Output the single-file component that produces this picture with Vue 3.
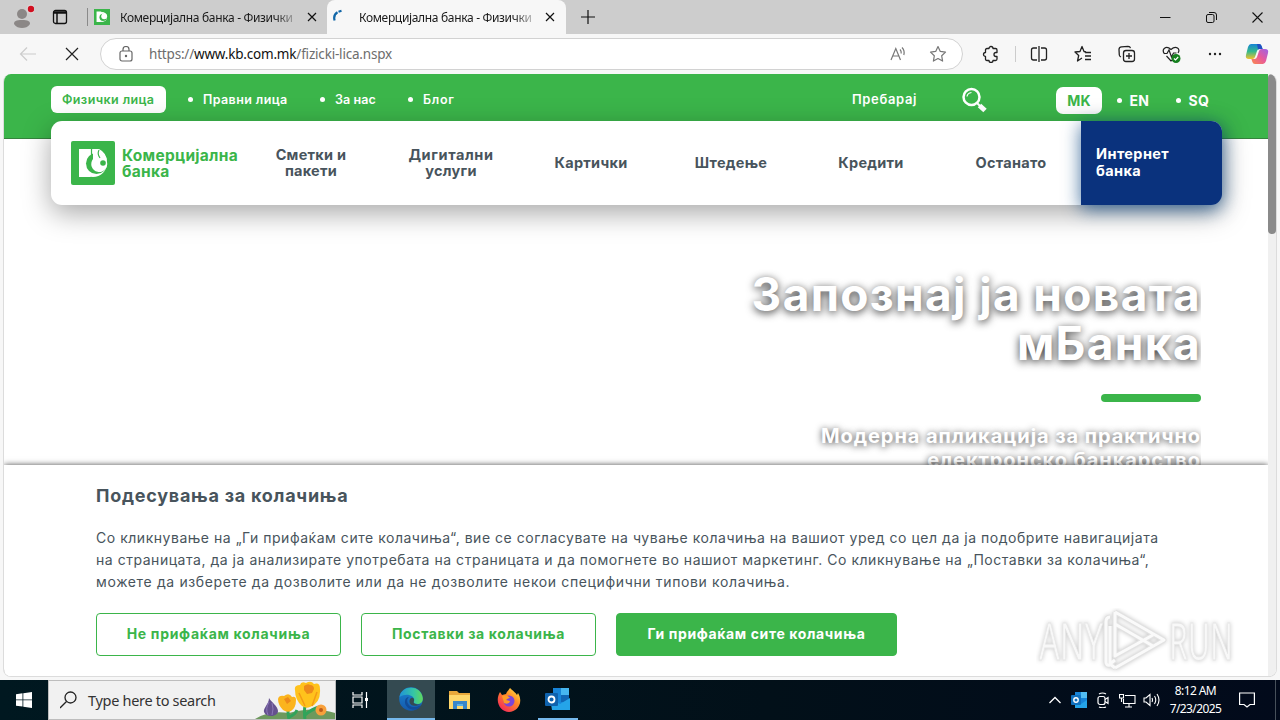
<template>
  <div class="screen">
    <div class="tabs">
      <div class="profile">
        <svg width="24" height="26" viewBox="0 0 24 26">
          <circle cx="12" cy="10" r="5" fill="#8b8786" />
          <path d="M4 20c0-3 2-4 8-4s8 1 8 4c-2 3-5 4-8 4s-6-1-8-4z" fill="#8b8786" />
          <circle cx="21" cy="5" r="4.5" fill="#dcd4d4" />
          <circle cx="21" cy="5" r="3.2" fill="#d10f20" />
        </svg>
      </div>
      <svg class="workspaces" width="16" height="16" viewBox="0 0 16 16" fill="none" stroke="#111" stroke-width="1.3">
        <rect x="1.500" y="1.500" width="13" height="13" rx="2" />
        <path d="M1.500 3.500h13" stroke-width="2.500" />
        <path d="M5 4v10" stroke-width="1.500" />
      </svg>
      <div class="tab first">
        <svg class="favicon" width="16" height="16" viewBox="0 0 44 44">
          <rect width="44" height="44" fill="#3bb54a" />
          <path d="M7 7h13v8q-6 4-6 10 0 7 6 11H7z" fill="#fff" />
          <circle cx="22" cy="22" r="14" fill="#fff" />
          <circle cx="25" cy="23" r="10" fill="#3bb54a" />
          <circle cx="28" cy="20" r="8" fill="#fff" />
        </svg>
        <span class="tab-title">Комерцијална банка - Физички</span>
        <svg class="x" width="10" height="10" viewBox="0 0 10 10"><path d="M1 1l8 8M9 1l-8 8" stroke="#111" stroke-width="1.2" /></svg>
      </div>
      <div class="tab active">
        <svg class="favicon" width="16" height="16" viewBox="0 0 16 16" fill="none" stroke="#1267a8" stroke-width="2.200">
          <path d="M2.600 11.500Q1 6 5.500 3.300M6.500 2.700L9.500 1.800" />
        </svg>
        <span class="tab-title">Комерцијална банка - Физички</span>
        <svg class="x" width="10" height="10" viewBox="0 0 10 10"><path d="M1 1l8 8M9 1l-8 8" stroke="#111" stroke-width="1.2" /></svg>
      </div>
      <svg class="plus" width="14" height="14" viewBox="0 0 14 14"><path d="M7 0v14M0 7h14" stroke="#111" stroke-width="1.2" /></svg>
      <div class="window-buttons">
        <svg width="11" height="11" viewBox="0 0 11 11"><path d="M0 5.500h10.500" stroke="#111" /></svg>
        <svg width="11" height="11" viewBox="0 0 11 11" fill="none" stroke="#111">
          <rect x="0.500" y="2.500" width="7.500" height="8" rx="1.500" />
          <path d="M3 .5h5q2.500 0 2.500 2.500v5" />
        </svg>
        <svg width="11" height="11" viewBox="0 0 11 11"><path d="M.5.5l10 10M10.500.5l-10 10" stroke="#111" stroke-width="1.100" /></svg>
      </div>
    </div>

    <div class="toolbar">
      <svg class="back" width="18" height="16" viewBox="0 0 18 16" fill="none" stroke="#ccc" stroke-width="1.200"><path d="M17 8H2M8 1.500L1.500 8 8 14.500" /></svg>
      <svg class="stop" width="14" height="14" viewBox="0 0 14 14"><path d="M1 1l12 12M13 1L1 13" stroke="#222" stroke-width="1.200" /></svg>
      <div class="address">
        <svg width="14" height="16" viewBox="0 0 14 16" fill="none" stroke="#666" stroke-width="1.200">
          <rect x="1" y="5" width="12" height="10" rx="2" />
          <path d="M4 5V3.500a3 3 0 0 1 6 0V5" />
          <circle cx="7" cy="10" r=".6" fill="#555" />
        </svg>
        <span class="url">https://<b>www.kb.com.mk</b>/fizicki-lica.nspx</span>
        <svg class="read" width="17" height="16" viewBox="0 0 17 16" fill="none" stroke="#777" stroke-width="1.200">
          <path d="M1 14L5.800 2.500 10.500 14M2.700 10h6.200M10 3.500q1.500 1.500 1.200 4M12 1.500q3 3 1.800 7.500" />
        </svg>
        <svg width="18" height="18" viewBox="0 0 18 18" fill="none" stroke="#777" stroke-width="1.200" stroke-linejoin="round"><path d="M9 1.500l2.300 4.900 5.200.7-3.800 3.700.9 5.300L9 13.500l-4.600 2.600.9-5.300L1.500 7.100l5.200-.7z" /></svg>
      </div>
      <div class="tools">
        <svg width="18" height="18" viewBox="0 0 18 18" fill="none" stroke="#222" stroke-width="1.300" stroke-linejoin="round">
          <path d="M5 3.500h2a2 2 0 0 1 4 0h2.500q1.500 0 1.500 1.500v2.500h-1a2 2 0 0 0 0 4h1V14q0 1.500-1.500 1.500H11a2 2 0 0 1-4 0H5Q3.500 15.500 3.500 14v-2.500a2 2 0 0 1 0-4V5Q3.500 3.500 5 3.500z" />
        </svg>
        <i class="divider"></i>
        <svg width="18" height="18" viewBox="0 0 18 18" fill="none" stroke="#222" stroke-width="1.300">
          <path d="M7 3H3.500Q1.500 3 1.500 5v8q0 2 2 2H7M11 3h3.500q2 0 2 2v8q0 2-2 2H11M9 1v16" />
        </svg>
        <svg width="18" height="18" viewBox="0 0 18 18" fill="none" stroke="#222" stroke-width="1.300" stroke-linejoin="round">
          <path d="M12 7L10 6.500 8 1.500 6 6.500l-5 .5 3.700 3.500-1.200 5.500 4.500-3M11 7.500h6M11 11h6M11 14.500h6" />
        </svg>
        <svg width="18" height="18" viewBox="0 0 18 18" fill="none" stroke="#222" stroke-width="1.300">
          <rect x="5.500" y="5.500" width="11" height="11" rx="2.500" />
          <path d="M3 12Q1.500 11.500 1.300 10L1 4.500Q1 2 3.500 1.800L10 1.300q2 0 2.500 1.800M11 8v6M8 11h6" />
        </svg>
        <svg width="20" height="18" viewBox="0 0 20 18" fill="none" stroke="#222" stroke-width="1.200">
          <path d="M2.500 9C-1 4 4 0 9 4.500 14 0 19 4 16 8M4.500 11l4.500 5 2-1.500M2 8.500h3l2-3.500 2.500 7 2-4h3" />
          <circle cx="14" cy="13.500" r="4.500" fill="#16801f" stroke="none" />
          <path d="M12 13.500l1.500 1.500 2.700-3" stroke="#fff" />
        </svg>
        <svg width="14" height="4" viewBox="0 0 14 4" fill="#222"><circle cx="2" cy="2" r="1.200" /><circle cx="7" cy="2" r="1.200" /><circle cx="12" cy="2" r="1.200" /></svg>
        <svg class="copilot" width="24" height="22" viewBox="0 0 24 22">
          <defs>
            <linearGradient id="cpA" x1="0" y1="0" x2="0" y2="1"><stop offset="0" stop-color="#1685d5" /><stop offset=".5" stop-color="#35b98b" /><stop offset="1" stop-color="#f2c12d" /></linearGradient>
            <linearGradient id="cpB" x1="1" y1="0" x2="0" y2="1"><stop offset="0" stop-color="#9b63e8" /><stop offset=".5" stop-color="#e85a9a" /><stop offset="1" stop-color="#fb8b4b" /></linearGradient>
          </defs>
          <path d="M6 1h8q2 0 2.600 2l1 3h-3q-2 0-2.600 2l-2 6q-.7 2-2.700 2H4q-4 0-3-4l2-8q1-3 3-3z" fill="url(#cpA)" />
          <path d="M18 21h-8q-2 0-2.600-2l-1-3h3q2 0 2.600-2l2-6q.7-2 2.700-2H20q4 0 3 4l-2 8q-1 3-3 3z" fill="url(#cpB)" />
          <path d="M12 1h2q2 0 2.600 2l1 3h-3q-1 0-1.600.6z" fill="#214fc4" />
        </svg>
      </div>
    </div>

    <div class="viewport">
      <div class="page">
        <header class="topbar">
          <span class="segment chosen">Физички лица</span>
          <span class="segment s-prav">Правни лица</span>
          <span class="segment s-nas">За нас</span>
          <span class="segment s-blog">Блог</span>
          <span class="search-label">Пребарај</span>
          <svg class="magnifier" width="26" height="26" viewBox="0 0 26 26" fill="none" stroke="#fff">
            <circle cx="10.500" cy="10" r="8" stroke-width="2.500" />
            <path d="M6 9.500q.5-3.500 4.500-4" stroke-width="1.200" />
            <path d="M16 16l3 3" stroke-width="2" />
            <path d="M18.500 18.500l5.500 5" stroke-width="5" />
          </svg>
          <span class="lang chosen">MK</span>
          <span class="lang l-en">EN</span>
          <span class="lang l-sq">SQ</span>
        </header>

        <nav class="menu">
          <div class="brand">
            <svg width="44" height="44" viewBox="0 0 44 44">
              <rect width="44" height="44" rx="2" fill="#3bb54a" />
              <path d="M8 8h11v10l-4 8q1 6 5 10H8z" fill="#fff" />
              <circle cx="22" cy="22" r="14" fill="#fff" />
              <path d="M8 8h12v4H8z" fill="#fff" />
              <path d="M20.500 7v7" stroke="#3bb54a" stroke-width="1.200" />
              <circle cx="25.500" cy="22.500" r="10.500" fill="#3bb54a" />
              <path d="M22 8h6q8 4 8 13a8 8 0 1 1-14-3z" fill="#fff" />
              <path d="M28 9q-2 4 1 8" fill="none" stroke="#3bb54a" stroke-width="1.200" />
              <circle cx="32" cy="22" r="2.800" fill="#3bb54a" />
            </svg>
            <div class="brand-name"><span>Комерцијална</span><span>банка</span></div>
          </div>
          <div v-for="item in menu" :key="item.id" class="menu-item" :class="item.id">
            <span v-for="line in item.lines" :key="line">{{ line }}</span>
          </div>
          <div class="ebank"><span>Интернет</span><span>банка</span></div>
        </nav>

        <section class="hero">
          <h1><span>Запознај ја новата</span><span>мБанка</span></h1>
          <div class="bar"></div>
          <p><span>Модерна апликација за практично</span><span>електронско банкарство</span></p>
        </section>

        <section class="cookies">
          <h2>Подесувања за колачиња</h2>
          <p>
            <span>Со кликнување на „Ги прифаќам сите колачиња“, вие се согласувате на чување колачиња на вашиот уред со цел да ја подобрите навигацијата</span>
            <span>на страницата, да ја анализирате употребата на страницата и да помогнете во нашиот маркетинг. Со кликнување на „Поставки за колачиња“,</span>
            <span class="last">можете да изберете да дозволите или да не дозволите некои специфични типови колачиња.</span>
          </p>
          <div class="buttons">
            <button class="deny">Не прифаќам колачиња</button>
            <button class="settings">Поставки за колачиња</button>
            <button class="accept">Ги прифаќам сите колачиња</button>
          </div>
        </section>
      </div>
      <div class="scrollbar"><div class="thumb"></div></div>

      <svg class="watermark" width="200" height="66" viewBox="0 0 200 66">
        <g class="mark halo">
          <path d="M79 4l49 28-49 28M79 4v44l38-21M79 16l38 22M74 9q-4 0-4 5v40q0 4 4 3V18M79 60l-5-4 5-4" />
          <text x="3" y="52" textLength="64" lengthAdjust="spacingAndGlyphs">ANY</text>
          <text x="133" y="52" textLength="64" lengthAdjust="spacingAndGlyphs">RUN</text>
        </g>
        <path class="inner" d="M79 4l49 28-49 28M79 4v44l38-21M79 16l38 22M74 9q-4 0-4 5v40q0 4 4 3V18M79 60l-5-4 5-4" />
      </svg>
    </div>

    <footer class="taskbar">
      <div class="start">
        <svg width="16" height="16" viewBox="0 0 16 16" fill="#fff"><path d="M0 2.200l6.500-.9v6.200H0zM7.300 1.200L16 0v7.500H7.300zM0 8.300h6.500v6.200L0 13.700zM7.300 8.300H16V16l-8.700-1.200z" /></svg>
      </div>
      <div class="searchbox">
        <svg width="18" height="18" viewBox="0 0 18 18" fill="none" stroke="#222" stroke-width="1.300"><circle cx="10.500" cy="6.500" r="5.500" /><path d="M6.500 10.500L0 17" /></svg>
        <span>Type here to search</span>
        <svg class="flowers" width="80" height="38" viewBox="0 0 80 38">
          <path d="M0 38q14-9 34-6 24-7 46 0v6z" fill="#6d995d" />
          <path d="M50 38q-2-12 3-22M50 34q7-6 14-8M34 38q-2-8 0-14M34 36q6-2 8-7" stroke="#31a45a" stroke-width="3" fill="none" />
          <path d="M14 17c2 4 9 8 9 13 0 6-12 7-14 1-1-4 5-8 5-14z" fill="#65518f" />
          <path d="M14 21q-4 7-1 13M17 22q2 6 0 12" stroke="#8c78b8" fill="none" />
          <path d="M40 9q-1-5 5-5 1-4 6-2 5-3 8 1 6-2 6 5 1 14-10 18-4 2-8-1-7-6-7-16z" fill="#ffc21c" />
          <path d="M23 18q1-4 6-3 5-4 8 1 4-1 4 3 0 8-5 11-4 2-8-1-5-5-5-11z" fill="#fbb41d" />
          <path d="M49 5q4-3 6-1 4 0 4 4l-2 4-5 1-3-4zM29 18l4-2 3 4-4 3z" fill="#ed8a1a" />
          <path d="M44 12l6 13M62 11l-5 14" stroke="#f39b15" stroke-width="1.500" />
          <circle cx="66" cy="29" r="5.500" fill="#f8a13c" /><circle cx="66" cy="29" r="2" fill="#bd5b18" />
        </svg>
      </div>
      <div class="app taskview">
        <svg width="18" height="18" viewBox="0 0 18 18" fill="none" stroke="#fff" stroke-width="1.200"><path d="M2 1v3h9V1M2 17v-3h9v3M2 6h9v6H2zM15.500 1v16" /><path d="M14 7h3v3h-3z" fill="#fff" stroke="none" /></svg>
      </div>
      <div class="app current">
        <svg width="24" height="24" viewBox="0 0 24 24">
          <defs>
            <linearGradient id="edA" x1="0" x2="1"><stop offset="0" stop-color="#2093d8" /><stop offset=".6" stop-color="#35c5a5" /><stop offset="1" stop-color="#61d85c" /></linearGradient>
            <linearGradient id="edB" x1="0" x2="0" y1="0" y2="1"><stop offset="0" stop-color="#1a85d2" /><stop offset="1" stop-color="#1559ac" /></linearGradient>
          </defs>
          <circle cx="12" cy="12" r="11.800" fill="url(#edB)" />
          <path d="M.5 10C2-2 22-3 23.800 11c.5 5-4 7-8 5.500-2-.8-1-2-.7-3C16 9 8 5 .5 10z" fill="url(#edA)" />
          <path d="M10 10c-4 3-1 11 6 10 3-.3 5-1.500 6-2-1 1.500-1.500 2.500-3 3.700C13 25 5 20 6 14c.5-3 2-4 4-4z" fill="#124c98" />
          <path d="M15 12c-2-3-5 0-4.500 3 .5 4 6 5 12 2-3 1-6 .5-7.500-1-1-1 .5-2 0-4z" fill="#344a51" />
        </svg>
      </div>
      <div class="app">
        <svg width="22" height="20" viewBox="0 0 22 20"><path d="M0 1h8l2 2h11v4H0z" fill="#e9a83b" /><path d="M0 5h21v14H0z" fill="#ffd76b" /><path d="M4 11h14v8h-4v-4H8v4H4z" fill="#3986c9" /><path d="M8 14h6v2H8z" fill="#5ab0e7" /></svg>
      </div>
      <div class="app">
        <svg width="24" height="24" viewBox="0 0 24 24">
          <defs><linearGradient id="ff" x1="1" y1="0" x2=".2" y2="1"><stop offset="0" stop-color="#fff04a" /><stop offset=".45" stop-color="#ff8a25" /><stop offset="1" stop-color="#f4245c" /></linearGradient></defs>
          <path d="M3 4l2 3 4-1c1-3 3-4 4-6 2 2 6 5 7 7l1-2c6 10-1 19-9 19S-3 14 3 4z" fill="url(#ff)" />
          <circle cx="12" cy="13" r="5.500" fill="#7b45d7" />
          <path d="M5 8q5-2 8 2-2 0-4 2l4 1q-1 4-6 2z" fill="#ff9b25" />
        </svg>
      </div>
      <div class="app open">
        <svg width="26" height="22" viewBox="0 0 26 22"><path d="M8 0h16v20H8z" fill="#1784d8" /><path d="M16 0h8v7h-8z" fill="#46b6f0" /><path d="M16 7h8v7h-8z" fill="#1066b5" /><path d="M5 10l10 6 10-6v12H7z" fill="#25a4e8" /><rect y="5" width="13" height="13" rx="1" fill="#0f62ad" /><circle cx="6.500" cy="11.500" r="3" fill="none" stroke="#fff" stroke-width="1.800" /></svg>
      </div>
      <div class="tray">
        <svg width="12" height="8" viewBox="0 0 12 8" fill="none" stroke="#fff" stroke-width="1.300"><path d="M.5 7L6 1.500 11.500 7" /></svg>
        <svg width="16" height="16" viewBox="0 0 16 16"><path d="M4 0h12v15H4z" fill="#1784d8" /><path d="M10 0h6v6h-6z" fill="#52bdf3" /><path d="M4 8l6 4 6-4v8H4z" fill="#25a4e8" /><rect y="3" width="10" height="10" rx="1" fill="#1070bd" /><circle cx="5" cy="8" r="2.200" fill="none" stroke="#fff" stroke-width="1.400" /></svg>
        <svg width="14" height="16" viewBox="0 0 14 16" fill="none" stroke="#fff" stroke-width="1.200"><rect x="2" y="4.500" width="7" height="8" rx="2" /><path d="M9 7.500l3-2v6l-3-2M3 2q3.500-2 7 0M3 15q3.500 1.500 7 0" /></svg>
        <svg width="17" height="15" viewBox="0 0 17 15" fill="none" stroke="#fff" stroke-width="1.100"><path d="M6 2.500h10v8H4.500V6M10 10.500V14M6 14h7M.5 1.500h4V5h-4zM2.500 5v4" /></svg>
        <svg width="17" height="14" viewBox="0 0 17 14" fill="none" stroke="#fff" stroke-width="1.100"><path d="M1 5h2l4-3.500v11L3 9H1zM9 5q1 2 0 4M11.500 3q2.500 4 0 8M14 1q4 6 0 12" /></svg>
      </div>
      <div class="clock"><span>8:12 AM</span><span>7/23/2025</span></div>
      <svg class="notice" width="16" height="16" viewBox="0 0 16 16" fill="none" stroke="#fff" stroke-width="1.200"><path d="M.6 1h14.800v11.500H11L8 15l-3-2.500H.6z" /></svg>
      <i class="peek"></i>
    </footer>
  </div>
</template>

<script setup>
const menu = [
  { id: 'smetki', lines: ['Сметки и', 'пакети'] },
  { id: 'uslugi', lines: ['Дигитални', 'услуги'] },
  { id: 'kartichki', lines: ['Картички'] },
  { id: 'shtedenje', lines: ['Штедење'] },
  { id: 'krediti', lines: ['Кредити'] },
  { id: 'ostanato', lines: ['Останато'] }
];
</script>

<style>
body {
  margin: 0;
  overflow: hidden;
}
</style>

<style scoped>
.screen {
  width: 1280px;
  height: 720px;
  display: flex;
  flex-direction: column;
  background: #f7f7f7;
  font-family: "Noto Sans", sans-serif;
  white-space: nowrap;
  overflow: hidden;
}

.screen * {
  box-sizing: border-box;
}

svg {
  display: block;
  flex: none;
}

.tabs {
  height: 34px;
  flex: none;
  display: flex;
  align-items: center;
  background: #cdcdcd;
}

.profile {
  width: 52px;
  padding-left: 10px;
}

.workspaces {
  margin-right: 19px;
}

.tab {
  height: 34px;
  display: flex;
  align-items: center;
  font-size: 12px;
  color: #1a1a1a;
}

.tab.first {
  width: 240px;
  background: linear-gradient(#8a8a8a, #8a8a8a) 0 50% / 1px 18px no-repeat;
  padding-left: 7px;
}

.tab.active {
  width: 239px;
  background: #f7f7f7;
  border-radius: 8px 8px 0 0;
  padding-left: 5px;
}

.tab-title {
  width: 176px;
  margin-left: 10px;
  letter-spacing: -0.33px;
  -webkit-mask-image: linear-gradient(90deg, #000 155px, transparent 180px);
  mask-image: linear-gradient(90deg, #000 155px, transparent 180px);
}

.active .tab-title {
  margin-left: 11px;
}

.tab .x {
  margin-left: 11px;
}

.active .x {
  margin-left: 10px;
}

.plus {
  margin-left: 15px;
}

.window-buttons {
  margin-left: auto;
  padding-right: 17px;
  display: flex;
  gap: 35px;
}

.toolbar {
  height: 40px;
  flex: none;
  display: flex;
  align-items: center;
  padding-left: 19px;
}

.stop {
  margin-left: 28px;
}

.address {
  width: 863px;
  height: 32px;
  flex: none;
  margin-left: 21px;
  border: 1px solid #d2d2d2;
  border-radius: 16px;
  background: #fff;
  display: flex;
  align-items: center;
  padding: 0 15px 0 18px;
}

.url {
  margin-left: 16px;
  font-size: 13.5px;
  letter-spacing: -0.19px;
  color: #6d6d6d;
}

.url b {
  font-weight: 400;
  color: #111;
}

.read {
  margin: 0 22px 0 auto;
}

.tools {
  display: flex;
  align-items: center;
  gap: 26px;
  padding-left: 19px;
}

.divider {
  width: 1px;
  height: 16px;
  background: #ccc;
  margin: 0 -12px 0 -11px;
}

.copilot {
  margin-left: -3px;
}

.viewport {
  width: 1274px;
  height: 603px;
  flex: none;
  margin-left: 3px;
  border: 1px solid #dcdcdc;
  border-top: none;
  border-radius: 8px;
  background: #fff;
  display: flex;
  overflow: hidden;
  position: relative;
}

.page {
  width: 1264px;
  flex: none;
  display: flex;
  flex-direction: column;
  font-family: Inter, sans-serif;
  background: #fff;
  overflow: hidden;
}

.topbar {
  height: 65px;
  flex: none;
  background: #3bb54a;
  border-bottom: 1px solid #35843d;
  display: flex;
  align-items: flex-start;
  padding: 12px 0 0 47px;
  color: #fff;
  font-size: 12.5px;
  font-weight: 600;
  line-height: 27px;
  letter-spacing: 0.4px;
}

.segment {
  display: flex;
  align-items: center;
}

.segment.chosen {
  width: 115px;
  height: 27px;
  padding-left: 11px;
  border-radius: 6px;
  background: #fff;
  color: #3bb54a;
}

.segment:not(.chosen)::before,
.lang:not(.chosen)::before {
  content: "";
  width: 5px;
  height: 5px;
  flex: none;
  border-radius: 50%;
  background: #fff;
  margin-right: 10px;
}

.s-prav {
  width: 132px;
  margin-left: 22px;
}

.s-nas {
  width: 88px;
  letter-spacing: 0.1px;
}

.s-blog {
  width: 444px;
  letter-spacing: 0.7px;
}

.search-label {
  width: 109px;
  font-size: 13px;
  letter-spacing: 0.65px;
}

.magnifier {
  margin: 1px 69px 0 0;
}

.lang {
  display: flex;
  align-items: center;
  font-size: 14px;
  font-weight: 700;
  margin-top: 1px;
  letter-spacing: 0.3px;
}

.lang.chosen {
  width: 46px;
  justify-content: center;
  border-radius: 7px;
  background: #fff;
  color: #3bb54a;
}

.l-en {
  width: 59px;
  margin-left: 15px;
}

.lang:not(.chosen)::before {
  margin-right: 7.5px;
}

.menu {
  width: 1171px;
  height: 84px;
  flex: none;
  margin: -18px 0 0 47px;
  border-radius: 11px;
  background: #fff;
  box-shadow: 0 8px 28px rgba(0, 0, 0, 0.35);
  display: flex;
  color: #48545c;
  font-size: 14.5px;
  font-weight: 700;
  line-height: 16px;
  letter-spacing: 0.27px;
  position: relative;
}

.brand {
  width: 190px;
  display: flex;
  align-items: center;
  padding-left: 20px;
  color: #3bb54a;
}

.brand-name {
  display: flex;
  flex-direction: column;
  margin-left: 7px;
  padding-top: 2px;
  font-size: 15.5px;
}

.menu-item {
  width: 140px;
  display: flex;
  flex-direction: column;
  align-items: center;
  justify-content: center;
}

.uslugi span:first-child {
  letter-spacing: 0.6px;
}

.ebank {
  width: 141px;
  display: flex;
  flex-direction: column;
  justify-content: center;
  padding: 0 0 2px 15px;
  border-radius: 0 11px 11px 0;
  background: #0a327d;
  box-shadow: 0 4px 18px rgba(10, 70, 130, 0.75);
  color: #fff;
  line-height: 17px;
  letter-spacing: 0.4px;
}

.hero {
  height: 260px;
  flex: none;
  display: flex;
  flex-direction: column;
  align-items: flex-end;
  margin: 0 67px 0 600px;
  padding-top: 65px;
  color: #fff;
  overflow: hidden;
}

.hero h1 {
  margin: 0;
  font-size: 46px;
  font-weight: 700;
  line-height: 49px;
  letter-spacing: 1.35px;
  text-shadow: 0 2px 8px rgba(0, 0, 0, 0.8);
}

.hero span {
  display: block;
  text-align: right;
}

.bar {
  width: 100px;
  height: 8px;
  flex: none;
  margin: 26px 0 22px;
  border-radius: 4px;
  background: #3bb54a;
}

.hero p {
  margin: 0;
  font-size: 20px;
  font-weight: 700;
  line-height: 24px;
  letter-spacing: 0.93px;
  text-shadow: 0 1px 7px rgba(0, 0, 0, 0.75);
}

.cookies {
  height: 212px;
  flex: none;
  background: #fff;
  box-shadow: 0 0 6px rgba(0, 0, 0, 0.7);
  padding: 18px 0 0 92px;
  color: #48545c;
  position: relative;
}

.cookies h2 {
  margin: 0;
  font-size: 18px;
  font-weight: 700;
  line-height: 26px;
  letter-spacing: 0.74px;
}

.cookies p {
  margin: 18px 0 20px;
  font-size: 14px;
  line-height: 22px;
  letter-spacing: 0.528px;
}

.cookies p span {
  display: block;
}

.cookies p .last {
  letter-spacing: 0.635px;
}

.buttons {
  display: flex;
  gap: 20px;
}

.buttons button {
  height: 43px;
  padding: 0 0 2px;
  border: 1px solid #3bb54a;
  border-radius: 4px;
  background: #fff;
  color: #3bb54a;
  font: 700 14px Inter, sans-serif;
  letter-spacing: 0.62px;
}

.buttons .deny {
  width: 245px;
  letter-spacing: 0.7px;
}

.buttons .settings {
  width: 235px;
}

.buttons .accept {
  width: 281px;
  background: #3bb54a;
  color: #fff;
}

.scrollbar {
  width: 8px;
  background: #f0f0f0;
}

.thumb {
  height: 160px;
  border-radius: 4px;
  background: #8a8a8a;
}

.watermark {
  position: absolute;
  left: 1032px;
  top: 534px;
}

.watermark path {
  fill: none;
  stroke-linejoin: round;
}

.mark path {
  stroke: #e2e2e2;
  stroke-width: 5;
}

.halo {
  filter: drop-shadow(0 0 2px rgba(0, 0, 0, 0.22));
}

.watermark .inner {
  stroke: #fafafa;
  stroke-width: 3;
}

.watermark text {
  font: 400 51px "Open Sans", sans-serif;
  fill: #f8f8f8;
  stroke: #e6e6e6;
  stroke-width: 0.8px;
}

.taskbar {
  height: 40px;
  margin-top: 3px;
  flex: none;
  display: flex;
  align-items: center;
  background: linear-gradient(90deg, #001820, #021019 60%, #020a1b);
  color: #fff;
}

.start {
  width: 48px;
  padding-left: 16px;
}

.searchbox {
  width: 288px;
  height: 40px;
  display: flex;
  align-items: center;
  padding-left: 11px;
  border: 1px solid #bdbdbd;
  background: #f1f1f1;
  color: #333;
  font-size: 14.5px;
}

.searchbox span {
  width: 167px;
  margin-left: 10px;
  letter-spacing: -0.31px;
}

.flowers {
  margin-left: 2px;
}

.app {
  width: 49px;
  height: 40px;
  display: flex;
  align-items: center;
  justify-content: center;
}

.app.taskview {
  width: 48px;
  margin-right: 3px;
}

.app.current {
  width: 48px;
  background: #344a51;
}

.app.open {
  width: 40px;
  margin-left: 5px;
}

.app.current,
.app.open {
  border-bottom: 2px solid #76b9ed;
}

.tray {
  margin-left: auto;
  display: grid;
  grid-template-columns: repeat(5, 24px);
  align-items: center;
  justify-items: center;
}

.clock {
  width: 65px;
  display: flex;
  flex-direction: column;
  align-items: center;
  font-size: 12px;
  line-height: 18px;
  letter-spacing: -0.6px;
}

.notice {
  margin-left: 11px;
}

.peek {
  width: 1px;
  height: 40px;
  margin: 0 4px 0 20px;
  background: #47505a;
}
</style>
